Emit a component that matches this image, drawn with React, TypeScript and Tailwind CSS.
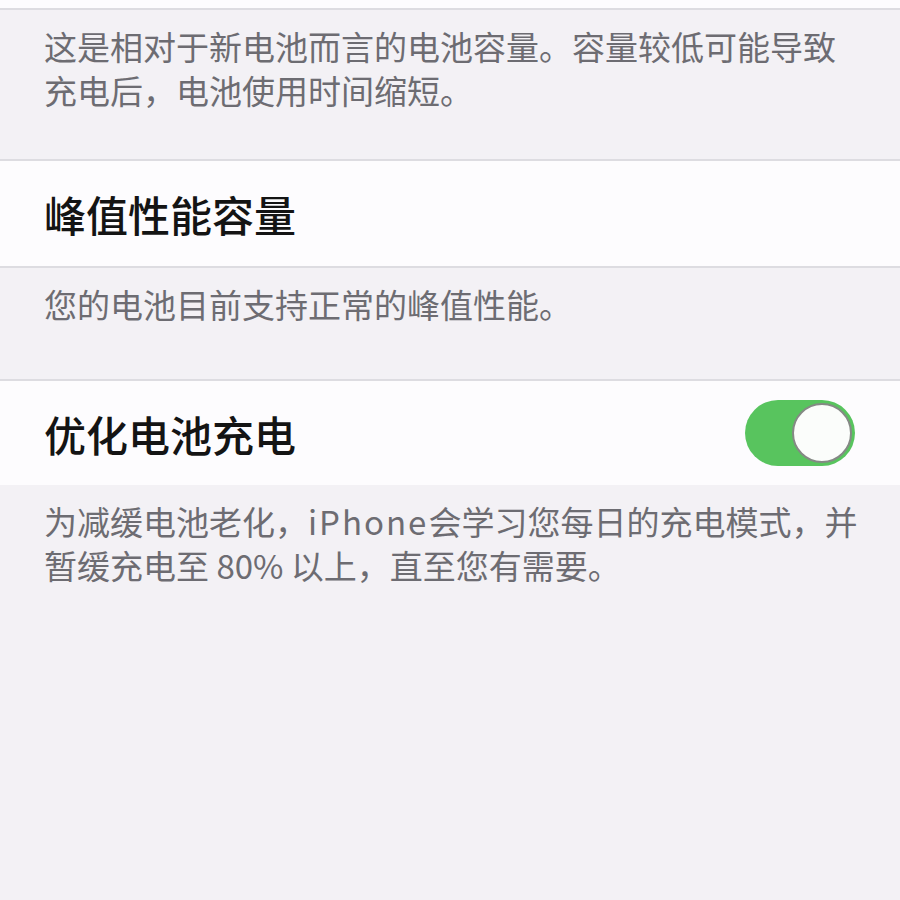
import React from "react";

const font = {
  fontFamily: '"Noto Sans CJK SC", "Noto Sans", sans-serif',
};

function Note({ lines }: { lines: React.ReactNode[] }) {
  return (
    <div className="px-[44px] pt-[14px] text-[33px] leading-[44px] text-[#6d6c72]">
      {lines.map((l, i) => (
        <div key={i} className="whitespace-nowrap">
          {l}
        </div>
      ))}
    </div>
  );
}

function Toggle({ on }: { on: boolean }) {
  return (
    <div
      className={`flex h-[66px] w-[110px] items-center rounded-full p-[3px] ${
        on ? "justify-end bg-[#58c45e]" : "justify-start bg-[#e5e5ea]"
      }`}
    >
      <div className="h-[60px] w-[60px] rounded-full border-2 border-[#858985] bg-[#fbfdfb]" />
    </div>
  );
}

export default function App() {
  return (
    <div className="min-h-[900px] w-[900px] bg-[#f3f1f5]" style={font}>
      <div className="h-[10px] border-b-2 border-[#dddce1] bg-[#fdfcfe]" />

      {/* capacity note */}
      <div className="h-[149px]">
        <Note
          lines={[
            "这是相对于新电池而言的电池容量。容量较低可能导致",
            "充电后，电池使用时间缩短。",
          ]}
        />
      </div>

      <div className="flex h-[109px] items-center border-y-2 border-[#dddce1] bg-[#fdfcfe] px-[44px]">
        <span className="text-[42px] font-medium text-[#141414]">峰值性能容量</span>
      </div>

      <div className="h-[111px]">
        <Note lines={["您的电池目前支持正常的峰值性能。"]} />
      </div>

      <div className="flex h-[106px] items-center justify-between border-t-2 border-[#dddce1] bg-[#fdfcfe] pl-[44px] pr-[45px]">
        <span className="text-[42px] font-medium text-[#141414]">优化电池充电</span>
        <Toggle on />
      </div>

      <Note
        lines={[
          <>
            为减缓电池老化，<span className="tracking-[2px]">iPhone</span>会学习您每日的充电模式，并
          </>,
          "暂缓充电至 80% 以上，直至您有需要。",
        ]}
      />
    </div>
  );
}
